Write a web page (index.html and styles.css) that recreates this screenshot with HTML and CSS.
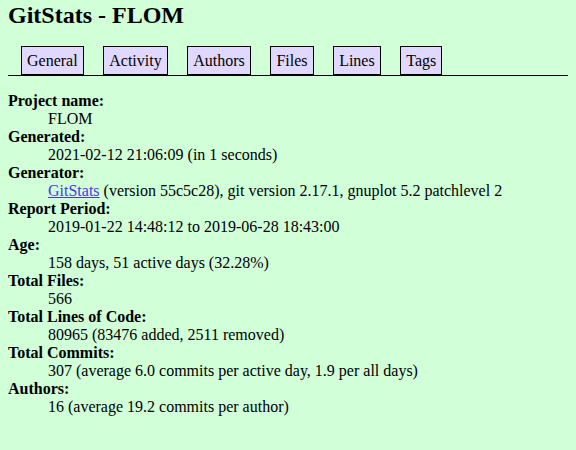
FILE: index.html
```
<!DOCTYPE html>
<html>
<head>
<meta charset="utf-8">
<title>GitStats - FLOM</title>
<link rel="stylesheet" href="styles.css">
</head>
<body>
<h1 class="title">GitStats - FLOM</h1>
<nav class="nav">
  <a class="tab" href="#">General</a>
  <a class="tab" href="#">Activity</a>
  <a class="tab" href="#">Authors</a>
  <a class="tab" href="#">Files</a>
  <a class="tab" href="#">Lines</a>
  <a class="tab" href="#">Tags</a>
</nav>
<dl class="info">
  <dt>Project name:</dt><dd>FLOM</dd>
  <dt>Generated:</dt><dd>2021-02-12 21:06:09 (in 1 seconds)</dd>
  <dt>Generator:</dt><dd><a class="link" href="#">GitStats</a> (version 55c5c28), git version 2.17.1, gnuplot 5.2 patchlevel 2</dd>
  <dt>Report Period:</dt><dd>2019-01-22 14:48:12 to 2019-06-28 18:43:00</dd>
  <dt>Age:</dt><dd>158 days, 51 active days (32.28%)</dd>
  <dt>Total Files:</dt><dd>566</dd>
  <dt>Total Lines of Code:</dt><dd>80965 (83476 added, 2511 removed)</dd>
  <dt>Total Commits:</dt><dd>307 (average 6.0 commits per active day, 1.9 per all days)</dd>
  <dt>Authors:</dt><dd>16 (average 19.2 commits per author)</dd>
</dl>
</body>
</html>
```
FILE: styles.css
```
html, body {
  background: #d0ffd8;
}
body {
  margin: 0 8px;
  color: #000;
  font-family: "Liberation Serif", "Times New Roman", serif;
  font-size: 16px;
}
.title {
  margin: 2px 0 0 0;
  font-size: 24px;
  font-weight: bold;
  line-height: 27.6px;
}
.nav {
  display: flex;
  align-items: flex-end;
  gap: 19.6px;
  margin-top: 16px;
  padding-left: 13px;
  border-bottom: 1px solid #000;
}
.tab {
  display: block;
  padding: 5px 5px 4px;
  line-height: 18px;
  border: 1px solid #000;
  background: #e0d8ff;
  color: #000;
  text-decoration: none;
}
.info {
  margin: 16px 0 0 0;
  line-height: 18px;
}
.info dt {
  font-weight: bold;
}
.info dd {
  margin-left: 40px;
}
.link {
  color: #4f35e8;
}
```
